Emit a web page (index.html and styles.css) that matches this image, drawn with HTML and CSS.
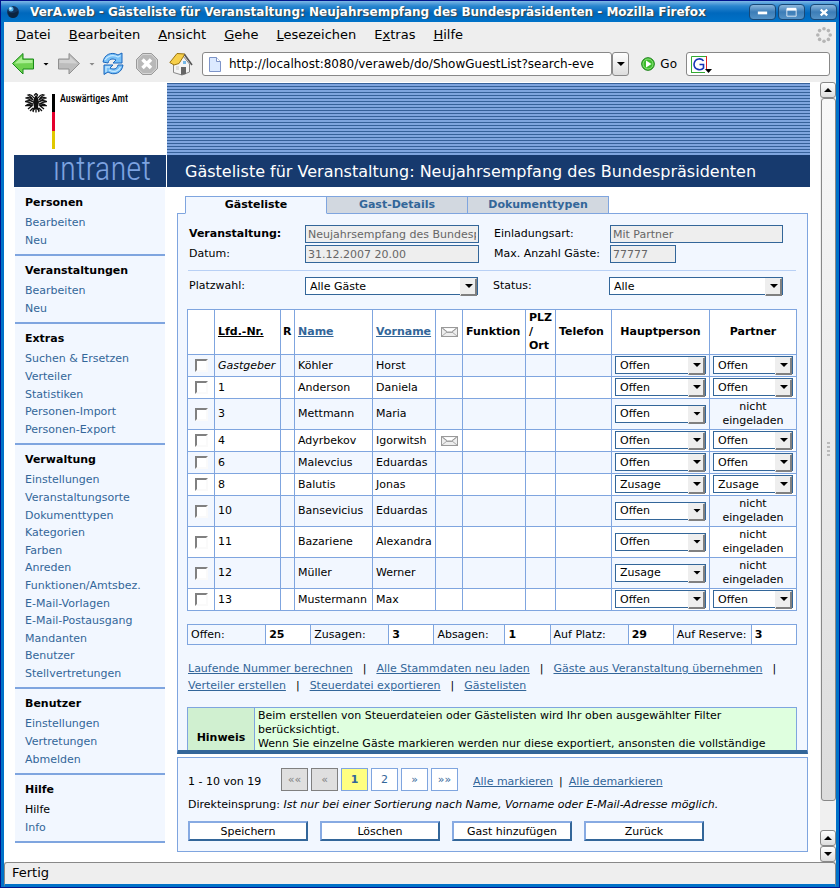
FILE: index.html
```html
<!DOCTYPE html>
<html lang="de">
<head>
<meta charset="utf-8">
<title>VerA.web - Gästeliste</title>
<link rel="stylesheet" href="styles.css">
</head>
<body>
<svg class="defs" aria-hidden="true">
  <symbol id="mail" viewBox="0 0 17 10"><rect x=".5" y=".5" width="16" height="9" fill="#eee" stroke="#999"/><path d="M1 1l5 4-5 4M16 1l-5 4 5 4M5 5.500h7" fill="none" stroke="#aaa"/><path d="M2 1.500l4.500 3.500h4L15 1.500" fill="#fff" stroke="#999"/></symbol>
</svg>
<div class="window">
  <header class="titlebar">
    <svg class="app-icon" viewBox="0 0 14 14"><circle cx="7" cy="7" r="6" fill="#123560"/><path d="M2 7c3 2 7 1 10-1 1 4-2 7-5 7S2 10 2 7z" fill="#0b2440"/><circle cx="5" cy="4" r="2.500" fill="#4fb0e8"/><circle cx="4.500" cy="3.500" r="1.200" fill="#c8ecff"/></svg>
    <span class="title">VerA.web - Gästeliste für Veranstaltung: Neujahrsempfang des Bundespräsidenten - Mozilla Firefox</span>
    <div class="win-buttons">
      <button type="button" aria-label="Minimieren"><svg viewBox="0 0 26 15"><path d="M8 7h10v3H8z" fill="#fff"/></svg></button>
      <button type="button" aria-label="Maximieren"><svg viewBox="0 0 26 15"><path d="M8 4h10v8H8z" fill="none" stroke="#dfeaf5"/><path d="M8 3h10v3H8z" fill="#fff"/></svg></button>
      <button type="button" class="close" aria-label="Schließen"><svg viewBox="0 0 26 15"><path d="M10 5l7 6M17 5l-7 6" stroke="#fff" stroke-width="2.500"/></svg></button>
    </div>
  </header>

  <nav class="menubar">
    <a href="#"><u>D</u>atei</a><a href="#"><u>B</u>earbeiten</a><a href="#"><u>A</u>nsicht</a><a href="#"><u>G</u>ehe</a><a href="#"><u>L</u>esezeichen</a><a href="#">E<u>x</u>tras</a><a href="#"><u>H</u>ilfe</a>
    <svg class="throbber" viewBox="0 0 16 16"><g fill="#b5b5b5"><circle cx="8" cy="1.800" r="1.800"/><circle cx="12.400" cy="3.600" r="1.800"/><circle cx="14.200" cy="8" r="1.800"/><circle cx="12.400" cy="12.400" r="1.800"/><circle cx="8" cy="14.200" r="1.800"/><circle cx="3.600" cy="12.400" r="1.800"/><circle cx="1.800" cy="8" r="1.800"/><circle cx="3.600" cy="3.600" r="1.800"/></g></svg>
  </nav>

  <div class="toolbar">
    <button type="button" class="nav-btn" aria-label="Zurück"><svg width="24" height="24" viewBox="0 0 24 24"><path d="M1.500 11.500L12 1.500v5.500h10.500v10H12v5z" fill="#6fd251" stroke="#178a17" stroke-linejoin="round"/><path d="M3.500 11.500L11 4.500V8h10.500v3z" fill="#a9ee92"/></svg></button>
    <span class="caret"></span>
    <button type="button" class="nav-btn" aria-label="Vor"><svg width="24" height="24" viewBox="0 0 24 24"><path d="M22.500 11.500L12 1.500v5.500H1.500v10H12v5z" fill="#bdbdbd" stroke="#909090" stroke-linejoin="round"/><path d="M20.500 11.500L13 4.500V8H2.500v3z" fill="#d2d2d2"/></svg></button>
    <span class="caret dim"></span>
    <button type="button" class="nav-btn" aria-label="Neu laden"><svg width="24" height="24" viewBox="0 0 24 24"><path d="M2 10C3 3 10-1 17 3l4-2v10h-9l3-3C11 6 8 7 7 11z" fill="#78c0f7" stroke="#1b67bd" stroke-linejoin="round"/><path d="M22 13c-1 8-9 11-15 7l-4 2.500V13h9l-3 3c4 2 7 1 8-3z" fill="#78c0f7" stroke="#1b67bd" stroke-linejoin="round"/><path d="M4 8c2-4 8-6 13-3l2.500-1.500M5 20v-5h4M8 18c5 3 10 1 11.500-3" fill="none" stroke="#c5e8ff" stroke-width="1.300"/></svg></button>
    <button type="button" class="nav-btn stop" aria-label="Stopp"><svg width="24" height="24" viewBox="0 0 24 24"><path d="M7.500 1.500h9l6 6v9l-6 6h-9l-6-6v-9z" fill="#b8b8b8" stroke="#999"/><path d="M7.800 2.500h8.400l5.300 5.300v8.400l-5.300 5.300H7.800l-5.300-5.300V7.800z" fill="none" stroke="#d6d6d6"/><path d="M7.500 7.500l8.500 8.500M16 7.500L7.500 16" stroke="#fff" stroke-width="3.500"/></svg></button>
    <button type="button" class="nav-btn home" aria-label="Startseite"><svg width="24" height="24" viewBox="0 0 24 24"><path d="M4.500 11.500L14 4l6.500 8v8L13 23l-8.500-2.500z" fill="#f4f4f4" stroke="#888"/><path d="M12 15h5v7l-5 1z" fill="#666"/><path d="M7 14h3v4H7z" fill="#ddd"/><path d="M14 9h3v3h-3z" fill="#75b8e8"/><path d="M.800 10.500L8 1.500l8 .500-6 9.500-5 1.500z" fill="#f6cf4a" stroke="#9a7410" stroke-linejoin="round"/><path d="M15.500 2.500L23 13" stroke="#555" stroke-width="1.600"/></svg></button>
    <div class="url">
      <svg width="12" height="15" viewBox="0 0 12 15"><path d="M.500.500h7l4 4v10H.500z" fill="#dceaff" stroke="#7d94c8"/><path d="M7.500.500v4h4" fill="#fff" stroke="#7d94c8"/></svg>
      <input type="text" aria-label="Adresse" value="http://localhost:8080/veraweb/do/ShowGuestList?search-eve">
    </div>
    <button type="button" class="url-drop" aria-label="Verlauf"><span class="caret"></span></button>
    <button type="button" class="go"><svg width="14" height="14" viewBox="0 0 14 14"><circle cx="7" cy="7" r="6.300" fill="#3dbb2c" stroke="#137c10"/><circle cx="7" cy="7" r="5" fill="none" stroke="#8be57b"/><path d="M5 3.500L10.500 7 5 10.500z" fill="#fff"/></svg>Go</button>
    <div class="search">
      <svg width="22" height="17" viewBox="0 0 22 17"><path d="M.500 16V.500H15" fill="none" stroke="#3a3"/><path d="M15.500 0v13" stroke="#d22"/><path d="M0 16.500h14" stroke="#3a3"/><path d="M12.500 5C11 2 4 1.500 3 8c0 6 7 7 9.500 4V8.500H8.500" fill="none" stroke="#1534b8" stroke-width="1.600"/><path d="M14 13h7l-3.500 4z"/></svg>
      <input type="text" aria-label="Suche">
    </div>
  </div>

  <div class="viewport">
    <div class="page">
      <div class="brand">
        <div class="logo">
          <svg class="eagle" width="22" height="20" viewBox="0 0 22 20"><path d="M11 2l2 3 1 4-1 5 2 4-4-2-4 2 2-4-1-5 1-4z" fill="#111"/><path d="M9 2.500L11 .500l1.500 1.500-1 2M9 5C7 2 5 1 3 2c2 1 4 3 5 5M13 5c2-3 4-4 6-3-2 1-4 3-5 5M8 7C5 4 3 4 1 5c3 1 5 2 7 4M14 7c3-3 5-3 7-2-3 1-5 2-7 4M8 9C5 7 3 7 .500 8.500 4 9 6 10 8 11M14 9c3-2 5-2 7.500-.500C18 9 16 10 14 11M8 11c-3-1-5 0-7 1.500 3 0 5 0 7-.500M14 11c3-1 5 0 7 1.500-3 0-5 0-7-.500M8 12l-5 4M14 12l5 4M8 15l-3 3M14 15l3 3M11 14v5.500M9 15l-1 4M13 15l1 4" fill="none" stroke="#111" stroke-width="1.300"/></svg>
          <span class="flag"><i></i><i></i><i></i></span>
          <span class="office">Auswärtiges Amt</span>
        </div>
        <div class="intranet">ıntranet</div>
      </div>
      <div class="banner"><div class="stripes"></div><h1>Gästeliste für Veranstaltung: Neujahrsempfang des Bundespräsidenten</h1></div>

      <nav class="side">
        <section><h2>Personen</h2><a href="#">Bearbeiten</a><a href="#">Neu</a></section>
        <section><h2>Veranstaltungen</h2><a href="#">Bearbeiten</a><a href="#">Neu</a></section>
        <section><h2>Extras</h2><a href="#">Suchen &amp; Ersetzen</a><a href="#">Verteiler</a><a href="#">Statistiken</a><a href="#">Personen-Import</a><a href="#">Personen-Export</a></section>
        <section><h2>Verwaltung</h2><a href="#">Einstellungen</a><a href="#">Veranstaltungsorte</a><a href="#">Dokumenttypen</a><a href="#">Kategorien</a><a href="#">Farben</a><a href="#">Anreden</a><a href="#">Funktionen/Amtsbez.</a><a href="#">E-Mail-Vorlagen</a><a href="#">E-Mail-Postausgang</a><a href="#">Mandanten</a><a href="#">Benutzer</a><a href="#">Stellvertretungen</a></section>
        <section><h2>Benutzer</h2><a href="#">Einstellungen</a><a href="#">Vertretungen</a><a href="#">Abmelden</a></section>
        <section><h2>Hilfe</h2><a href="#" class="current">Hilfe</a><a href="#">Info</a></section>
      </nav>

      <main class="main">
        <div class="tabs"><a href="#" class="active">Gästeliste</a><a href="#">Gast-Details</a><a href="#">Dokumenttypen</a></div>
        <div class="panel">
          <div class="fields">
            <label for="ev"><b>Veranstaltung:</b></label><input id="ev" disabled value="Neujahrsempfang des Bundespräsidenten">
            <label for="art">Einladungsart:</label><input id="art" disabled value="Mit Partner">
            <label for="dat">Datum:</label><input id="dat" disabled value="31.12.2007 20.00">
            <label for="max">Max. Anzahl Gäste:</label><input id="max" class="short" disabled value="77777">
          </div>
          <div class="fields filters">
            <label for="platz">Platzwahl:</label><span class="pick"><select id="platz"><option>Alle Gäste</option></select></span>
            <label for="status">Status:</label><span class="pick"><select id="status"><option>Alle</option></select></span>
          </div>

          <table class="guests">
            <colgroup><col class="c1"><col class="c2"><col class="c3"><col class="c4"><col class="c5"><col class="c6"><col class="c7"><col class="c8"><col class="c9"><col class="c10"><col class="c11"></colgroup>
            <thead><tr><th></th><th><a href="#" class="sorted">Lfd.-Nr.</a></th><th>R</th><th><a href="#">Name</a></th><th><a href="#">Vorname</a></th><th class="mid"><svg class="mail"><use href="#mail"/></svg></th><th>Funktion</th><th>PLZ<br>/<br>Ort</th><th>Telefon</th><th class="mid">Hauptperson</th><th class="mid">Partner</th></tr></thead>
            <tbody>
              <tr><td class="mid"><input type="checkbox" aria-label="Köhler"></td><td><em>Gastgeber</em></td><td></td><td>Köhler</td><td>Horst</td><td></td><td></td><td></td><td></td><td class="state"><span class="pick"><select aria-label="Hauptperson"><option>Offen</option></select></span></td><td class="state"><span class="pick"><select aria-label="Partner"><option>Offen</option></select></span></td></tr>
              <tr><td class="mid"><input type="checkbox" aria-label="Anderson"></td><td>1</td><td></td><td>Anderson</td><td>Daniela</td><td></td><td></td><td></td><td></td><td class="state"><span class="pick"><select aria-label="Hauptperson"><option>Offen</option></select></span></td><td class="state"><span class="pick"><select aria-label="Partner"><option>Offen</option></select></span></td></tr>
              <tr><td class="mid"><input type="checkbox" aria-label="Mettmann"></td><td>3</td><td></td><td>Mettmann</td><td>Maria</td><td></td><td></td><td></td><td></td><td class="state"><span class="pick"><select aria-label="Hauptperson"><option>Offen</option></select></span></td><td class="mid">nicht<br>eingeladen</td></tr>
              <tr><td class="mid"><input type="checkbox" aria-label="Adyrbekov"></td><td>4</td><td></td><td>Adyrbekov</td><td>Igorwitsh</td><td class="mid"><svg class="mail"><use href="#mail"/></svg></td><td></td><td></td><td></td><td class="state"><span class="pick"><select aria-label="Hauptperson"><option>Offen</option></select></span></td><td class="state"><span class="pick"><select aria-label="Partner"><option>Offen</option></select></span></td></tr>
              <tr><td class="mid"><input type="checkbox" aria-label="Malevcius"></td><td>6</td><td></td><td>Malevcius</td><td>Eduardas</td><td></td><td></td><td></td><td></td><td class="state"><span class="pick"><select aria-label="Hauptperson"><option>Offen</option></select></span></td><td class="state"><span class="pick"><select aria-label="Partner"><option>Offen</option></select></span></td></tr>
              <tr><td class="mid"><input type="checkbox" aria-label="Balutis"></td><td>8</td><td></td><td>Balutis</td><td>Jonas</td><td></td><td></td><td></td><td></td><td class="state"><span class="pick"><select aria-label="Hauptperson"><option>Zusage</option></select></span></td><td class="state"><span class="pick"><select aria-label="Partner"><option>Zusage</option></select></span></td></tr>
              <tr><td class="mid"><input type="checkbox" aria-label="Bansevicius"></td><td>10</td><td></td><td>Bansevicius</td><td>Eduardas</td><td></td><td></td><td></td><td></td><td class="state"><span class="pick"><select aria-label="Hauptperson"><option>Offen</option></select></span></td><td class="mid">nicht<br>eingeladen</td></tr>
              <tr><td class="mid"><input type="checkbox" aria-label="Bazariene"></td><td>11</td><td></td><td>Bazariene</td><td>Alexandra</td><td></td><td></td><td></td><td></td><td class="state"><span class="pick"><select aria-label="Hauptperson"><option>Offen</option></select></span></td><td class="mid">nicht<br>eingeladen</td></tr>
              <tr><td class="mid"><input type="checkbox" aria-label="Müller"></td><td>12</td><td></td><td>Müller</td><td>Werner</td><td></td><td></td><td></td><td></td><td class="state"><span class="pick"><select aria-label="Hauptperson"><option>Zusage</option></select></span></td><td class="mid">nicht<br>eingeladen</td></tr>
              <tr><td class="mid"><input type="checkbox" aria-label="Mustermann"></td><td>13</td><td></td><td>Mustermann</td><td>Max</td><td></td><td></td><td></td><td></td><td class="state"><span class="pick"><select aria-label="Hauptperson"><option>Offen</option></select></span></td><td class="state"><span class="pick"><select aria-label="Partner"><option>Offen</option></select></span></td></tr>
            </tbody>
          </table>

          <table class="totals">
            <colgroup><col class="wide"><col class="num"><col class="wide"><col class="num"><col class="narrow"><col class="num"><col class="wide"><col class="num"><col class="wide"><col class="num"></colgroup>
            <tr><td>Offen:</td><th>25</th><td>Zusagen:</td><th>3</th><td>Absagen:</td><th>1</th><td>Auf Platz:</td><th>29</th><td>Auf Reserve:</td><th>3</th></tr>
          </table>

          <div class="actions">
            <div><a href="#">Laufende Nummer berechnen</a><span>|</span><a href="#">Alle Stammdaten neu laden</a><span>|</span><a href="#">Gäste aus Veranstaltung übernehmen</a><span>|</span></div>
            <div><a href="#">Verteiler erstellen</a><span>|</span><a href="#">Steuerdatei exportieren</a><span>|</span><a href="#">Gästelisten</a></div>
          </div>

          <table class="hint"><tr><th>Hinweis</th><td>Beim erstellen von Steuerdateien oder Gästelisten wird Ihr oben ausgewählter Filter<br>berücksichtigt.<br>Wenn Sie einzelne Gäste markieren werden nur diese exportiert, ansonsten die vollständige</td></tr></table>
        </div>

        <div class="footer">
          <div class="pager">
            <span class="range">1 - 10 von 19</span>
            <div class="pages"><button type="button" disabled>««</button><button type="button" disabled>«</button><button type="button" class="on">1</button><button type="button">2</button><button type="button">»</button><button type="button">»»</button></div>
            <div class="marks"><a href="#">Alle markieren</a><span>|</span><a href="#">Alle demarkieren</a></div>
          </div>
          <div class="jump">Direkteinsprung: <em>Ist nur bei einer Sortierung nach Name, Vorname oder E-Mail-Adresse möglich.</em></div>
          <div class="buttons"><button type="button">Speichern</button><button type="button">Löschen</button><button type="button">Gast hinzufügen</button><button type="button">Zurück</button></div>
        </div>
      </main>
    </div>
    <div class="scrollbar"><div class="arrow"><i class="up"></i></div><div class="thumb"><i class="grip"></i></div><div class="track"></div><div class="arrow"><i class="up"></i></div><div class="arrow"><i class="down"></i></div></div>
  </div>
  <footer class="statusbar">Fertig</footer>
</div>
</body>
</html>
```
FILE: styles.css
```css
* { box-sizing: border-box; }
html, body { height: 100%; margin: 0; }
body { font: 11px/14px "DejaVu Sans", Verdana, sans-serif; color: #000; background: #fff; }
button, input, select { font: inherit; color: inherit; margin: 0; padding: 0; }
.defs { position: absolute; width: 0; height: 0; }

.window { height: 100vh; min-height: 700px; display: flex; flex-direction: column; border: 1px solid #00148c; border-top-width: 0; box-shadow: inset 3px 0 #0072c8, inset -3px 0 #0072c8; padding: 0 3px; background: #eee; overflow: hidden; }
.titlebar { height: 22px; flex: none; margin: 0 -3px; padding: 0 2px 0 5px; display: flex; align-items: center; border-top: 1px solid #00148c; background: linear-gradient(#7db8e6, #2a86cf 5px, #0068bd 12px, #0072c8); }
.app-icon { width: 14px; height: 14px; margin-right: 10px; flex: none; }
.title { flex: 1; min-width: 0; font-size: 12px; font-weight: bold; color: #fff; white-space: nowrap; overflow: hidden; text-shadow: 1px 1px 1px #444; }
.win-buttons { display: flex; gap: 2px; flex: none; }
.win-buttons button { width: 27px; height: 16px; border: 1px solid #174877; border-radius: 4px; background: linear-gradient(#8bb7dd, #3c7db7 50%, #5492c6); }
.win-buttons .close { margin-left: 3px; }
.win-buttons svg { display: block; width: 100%; height: 100%; }

.menubar { height: 26px; flex: none; display: flex; align-items: center; gap: 18px; padding: 0 4px 0 12px; font-size: 13px; background: #eee; }
.menubar a { color: #000; text-decoration: none; }
.throbber { width: 16px; height: 16px; margin-left: auto; }

.toolbar { height: 34px; flex: none; display: flex; align-items: center; padding: 0 6px 2px 7px; font-size: 12px; background: #eee; }
.nav-btn { border: 0; background: none; width: 24px; height: 24px; flex: none; }
.nav-btn svg { display: block; }
.stop { margin-left: 10px; }
.home { margin: 0 9px 0 10px; }
.caret { flex: none; width: 6px; height: 3px; margin: 0 8px; background: #000; clip-path: polygon(0 0, 100% 0, 50% 100%); }
.caret.dim { background: #888; margin: 0 6px 0 8px; }
.url, .search { height: 24px; display: flex; align-items: center; border: 1px solid #888; border-radius: 3px; background: #fff; padding: 0 6px; }
.url { flex: 1; min-width: 0; gap: 8px; }
.url svg, .search svg { flex: none; }
.url input, .search input { border: 0; background: none; flex: 1; min-width: 0; width: 0; outline: 0; }
.url-drop { width: 17px; height: 24px; flex: none; border: 1px solid #888; border-radius: 3px; background: linear-gradient(#fff, #ddd); display: flex; align-items: center; justify-content: center; }
.url-drop .caret { width: 8px; height: 4px; margin: 0; }
.go { display: flex; align-items: center; gap: 5px; margin: 0 9px 0 12px; border: 0; background: none; }
.search { width: 144px; flex: none; padding: 0 4px; }

.viewport { flex: 1; min-height: 0; display: flex; background: #fff; }
.page { flex: 1; min-width: 0; display: grid; grid-template-columns: 152px minmax(0, 1fr); grid-template-rows: 105px minmax(0, 1fr); column-gap: 1px; padding: 0 10px; }
.brand { display: flex; flex-direction: column; }
.logo { flex: 1; display: flex; align-items: flex-start; padding: 11px 0 0 11px; }
.flag { display: grid; width: 3px; height: 55px; margin: 1px 5px 0 5px; }
.flag i:nth-child(1) { background: #000; }
.flag i:nth-child(2) { background: #e4002c; }
.flag i:nth-child(3) { background: #e0c800; }
.office { font: 500 10px/12px "Roboto Condensed", "Open Sans Condensed", "Liberation Sans", sans-serif; white-space: nowrap; }
.intranet { height: 32px; background: #173a6e; color: #7da3e0; font: 300 33px/28px "Roboto Condensed", "Roboto", sans-serif; text-align: right; padding-right: 15px; white-space: nowrap; }
.banner { display: flex; flex-direction: column; padding-top: 1px; }
.stripes { flex: 1; background: repeating-linear-gradient(#36619a 0 1px, #7fa5df 1px 3px); }
.banner h1 { margin: 0; height: 32px; padding-left: 18px; background: #173a6e; color: #fff; font-size: 16px; line-height: 34px; font-weight: normal; white-space: nowrap; }

a { color: #336699; }
.side { margin: 1px 1px 0; align-self: start; }
.side section { display: flex; flex-direction: column; padding: 7px 10px 5px; border-bottom: 2px solid #7fa5df; background: #f2f7ff; line-height: 1.6; }
.side h2 { margin: 0 0 3px; font-size: 11px; line-height: 16px; font-weight: bold; }
.side a { text-decoration: none; }
.side a.current { color: #000; }

.main { display: flex; flex-direction: column; min-height: 0; padding: 9px 2px 10px 10px; }
.tabs { display: flex; height: 18px; flex: none; margin: 0 0 -1px 8px; position: relative; }
.tabs a { width: 141px; border: 1px solid #7fa5df; border-left: 0; background: #d2d8e0; text-align: center; font-weight: bold; line-height: 16px; text-decoration: none; }
.tabs a.active { width: 142px; border-left: 1px solid #7fa5df; border-bottom-color: #f2f7ff; background: #f2f7ff; color: #000; }
.panel { flex: 1; min-height: 0; overflow: hidden; border: 1px solid #7fa5df; border-bottom: 4px solid #336699; background: #f2f7ff; padding: 10px 10px 0 9px; }
.fields { display: grid; grid-template-columns: 116px 174px 131px 173px; row-gap: 2px; align-items: center; padding: 1px 1px 7px 2px; }
.fields label:nth-of-type(2n) { padding-left: 15px; }
.fields input { width: 100%; height: 18px; border: 1px solid #336699; background: #eee; color: #666; padding: 0 2px; }
.fields input.short { width: 66px; }
.filters { border-top: 1px solid #b8d0f5; margin: 0 1px 14px; padding: 6px 0 0 1px; grid-template-columns: 116px 173px 131px 174px; }

.pick { display: block; position: relative; height: 18px; }
.pick select { appearance: none; display: block; width: 100%; height: 18px; border: 1px solid #336699; border-radius: 0; background: #fff; padding: 1px 16px 0 4px; }
.pick::before { content: ""; position: absolute; right: 1px; top: 1px; width: 15px; height: 16px; border: 1px solid; border-color: #eee #808080 #808080 #eee; box-shadow: inset -1px -1px #808080; background: #eee; pointer-events: none; }
.pick::after { content: ""; position: absolute; right: 5px; top: 7px; width: 8px; height: 4px; background: #000; clip-path: polygon(0 0, 100% 0, 50% 100%); pointer-events: none; }

table { border-collapse: collapse; table-layout: fixed; width: 100%; }
td, th { border: 1px solid #7fa5df; padding: 1px 3px; text-align: left; white-space: nowrap; }
.guests td { height: 22px; }
.guests th { background: #fff; }
.guests tbody tr { background: #fff; }
.guests tbody tr:nth-child(odd) { background: #f2f7ff; }
.guests .mid { text-align: center; }
.guests .sorted { color: #000; }
.c1 { width: 27px; } .c2 { width: 66px; } .c3 { width: 14px; } .c4 { width: 78px; } .c5 { width: 63px; } .c6 { width: 27px; }
.c7 { width: 63px; } .c8 { width: 30px; } .c9 { width: 56px; } .c10 { width: 98px; } .c11 { width: 87px; }
.guests .state { padding-bottom: 2px; }
.guests th:nth-child(3) { padding: 1px 2px; }
.mail { display: inline-block; width: 17px; height: 10px; vertical-align: middle; }
.guests input { appearance: none; display: block; width: 13px; height: 13px; margin: 0 auto; border: 2px solid; border-color: #808080 #fafafa #fafafa #808080; background: #fff; }

.totals { margin-top: 13px; }
.totals td, .totals th { height: 20px; }
.totals th { background: #fff; }
.wide { width: 78px; } .num { width: 45px; } .narrow { width: 71px; }

.actions { margin: 15px 0 13px 1px; line-height: 17px; white-space: nowrap; }
.actions span { margin: 0 10px; }
.hint th { width: 67px; height: 60px; text-align: center; background: #d0f0d0; }
.hint td { background: #dfffdf; vertical-align: top; }

.footer { flex: none; margin-top: 3px; border: 1px solid #7fa5df; background: #f2f7ff; padding: 10px; }
.pager { display: flex; align-items: center; }
.range { width: 93px; padding-top: 4px; }
.pages { display: flex; gap: 3px; margin-right: 15px; }
.pages button { width: 27px; height: 23px; border: 1px solid #7fa5df; background: #fff; color: #336699; }
.pages button:disabled { border-color: #808080; background: #dfdfdf; color: #808080; }
.pages .on { background: #ffff80; font-weight: bold; }
.marks { padding-top: 4px; }
.marks span { margin: 0 6px; }
.jump { margin: 7px 0 9px; }
.buttons { display: flex; gap: 12px; }
.buttons button { width: 120px; height: 20px; border: 2px solid; border-color: #87aae2 #336699 #336699 #87aae2; background: #fff; padding-top: 2px; }

.scrollbar { width: 16px; flex: none; display: flex; flex-direction: column; background: #f0f0f0; }
.arrow { height: 16px; border: 1px solid #888; border-radius: 3px; background: linear-gradient(#fff, #ddd); display: flex; align-items: center; justify-content: center; }
.arrow i { width: 8px; height: 4px; background: #000; }
.up { clip-path: polygon(50% 0, 100% 100%, 0 100%); }
.down { clip-path: polygon(0 0, 100% 0, 50% 100%); }
.thumb { flex: 1; margin-left: 1px; border: 1px solid #888; border-radius: 3px; background: linear-gradient(#f8f8f8, #dcdcdc); display: flex; align-items: center; justify-content: center; }
.grip { width: 3px; height: 15px; background: repeating-linear-gradient(#bbb 0 2px, transparent 2px 4px); }
.track { height: 29px; }
.statusbar { height: 25px; flex: none; border: 1px solid #888; border-bottom: 3px solid #0072c8; border-radius: 3px 3px 0 0; padding-left: 7px; font-size: 13px; line-height: 20px; background: #eee; }
```
